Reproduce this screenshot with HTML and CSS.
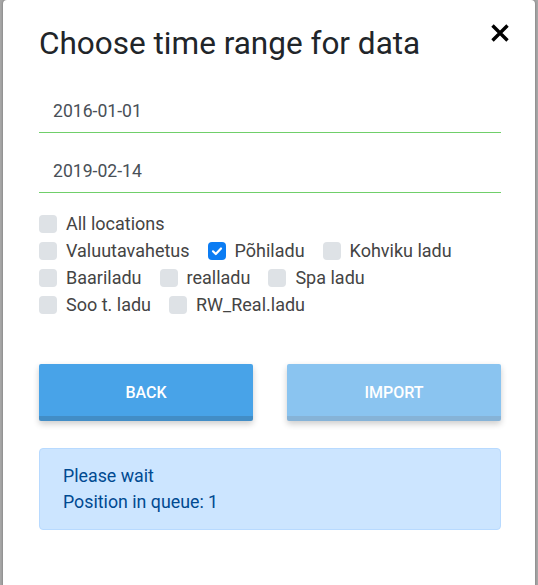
FILE: index.html
```html
<!DOCTYPE html>
<html>
<head>
<meta charset="utf-8">
<link rel="stylesheet" href="styles.css">
</head>
<body>
<div class="modal">
  <button class="close" aria-label="Close">
    <svg width="20" height="20" viewBox="0 0 20 20"><path d="M2.5 2.5 L17.5 17.5 M17.5 2.5 L2.5 17.5" stroke="#000" stroke-width="3.4" stroke-linecap="butt"/></svg>
  </button>
  <h3 class="title">Choose time range for data</h3>
  <div class="field"><span class="value">2016-01-01</span></div>
  <div class="field"><span class="value">2019-02-14</span></div>
  <div class="checks">
    <div class="row">
      <label class="check"><span class="box"></span>All locations</label>
    </div>
    <div class="row wrap">
      <label class="check"><span class="box"></span>Valuutavahetus</label>
      <label class="check"><span class="box on"><svg width="18" height="18" viewBox="0 0 18 18"><path d="M5 9.3 L7.8 12 L13 6.5" fill="none" stroke="#fff" stroke-width="2.2" stroke-linecap="round" stroke-linejoin="round"/></svg></span>Põhiladu</label>
      <label class="check"><span class="box"></span>Kohviku ladu</label>
      <label class="check"><span class="box"></span>Baariladu</label>
      <label class="check"><span class="box"></span>realladu</label>
      <label class="check"><span class="box"></span>Spa ladu</label>
      <label class="check"><span class="box"></span>Soo t. ladu</label>
      <label class="check"><span class="box"></span>RW_Real.ladu</label>
    </div>
  </div>
  <div class="buttons">
    <button class="btn back">BACK</button>
    <button class="btn import">IMPORT</button>
  </div>
  <div class="alert">
    <div>Please wait</div>
    <div>Position in queue: 1</div>
  </div>
</div>
</body>
</html>
```
FILE: styles.css
```css
html, body {
  margin: 0;
  padding: 0;
}
body {
  background: #a8a8a8;
  font-family: Roboto, "Liberation Sans", Arial, sans-serif;
  overflow: hidden;
}
.modal {
  position: relative;
  margin-left: 3px;
  width: 532px;
  min-height: 620px;
  background: #fff;
  border-radius: 4px 4px 0 0;
  box-shadow: 0 0 3px rgba(0,0,0,0.35);
  padding: 0 34px 0 36px;
  box-sizing: border-box;
}
.close {
  position: absolute;
  top: 23px;
  left: 487px;
  width: 20px;
  height: 20px;
  padding: 0;
  border: 0;
  background: none;
  display: block;
}
.close svg { display: block; }
.title {
  margin: 0;
  padding-top: 26px;
  font-size: 31.5px;
  line-height: 36px;
  font-weight: 400;
  color: #212529;
}
.field {
  margin-top: 32px;
  height: 38px;
  border-bottom: 1px solid #70cf6a;
  padding: 0 14px;
  box-sizing: content-box;
  display: flex;
  align-items: center;
}
.field + .field {
  margin-top: 21px;
}
.value {
  font-size: 17.6px;
  line-height: 24px;
  color: #495057;
  position: relative;
  top: -2px;
}
.checks {
  margin-top: 17px;
}
.row {
  display: flex;
}
.wrap {
  flex-wrap: wrap;
}
.check {
  display: flex;
  align-items: center;
  height: 27px;
  margin-right: 18px;
  font-size: 18px;
  color: #444;
}
.box {
  width: 18px;
  height: 18px;
  border-radius: 4px;
  background: #dee2e6;
  margin-right: 9px;
  flex: none;
}
.box.on {
  background: #0b7cf3;
}
.box svg { display: block; }
.buttons {
  margin-top: 46px;
  display: flex;
  justify-content: space-between;
}
.btn {
  width: 214px;
  height: 57px;
  border: 0;
  border-radius: 2px;
  font-family: Roboto, "Liberation Sans", Arial, sans-serif;
  font-size: 16px;
  font-weight: 500;
  color: #fff;
  padding: 4px 0 0;
  box-shadow: 0 3px 6px rgba(0,0,0,0.2);
}
.back {
  background: #48a3e8;
  border-bottom: 5px solid #428dc6;
}
.import {
  background: #8ac4f0;
  border-bottom: 5px solid #86b3d7;
}
.alert {
  margin-top: 27px;
  background: #cce5ff;
  border: 1px solid #b8daff;
  border-radius: 4px;
  color: #004a91;
  font-size: 17.8px;
  line-height: 26px;
  padding: 14px 23px;
}
```
